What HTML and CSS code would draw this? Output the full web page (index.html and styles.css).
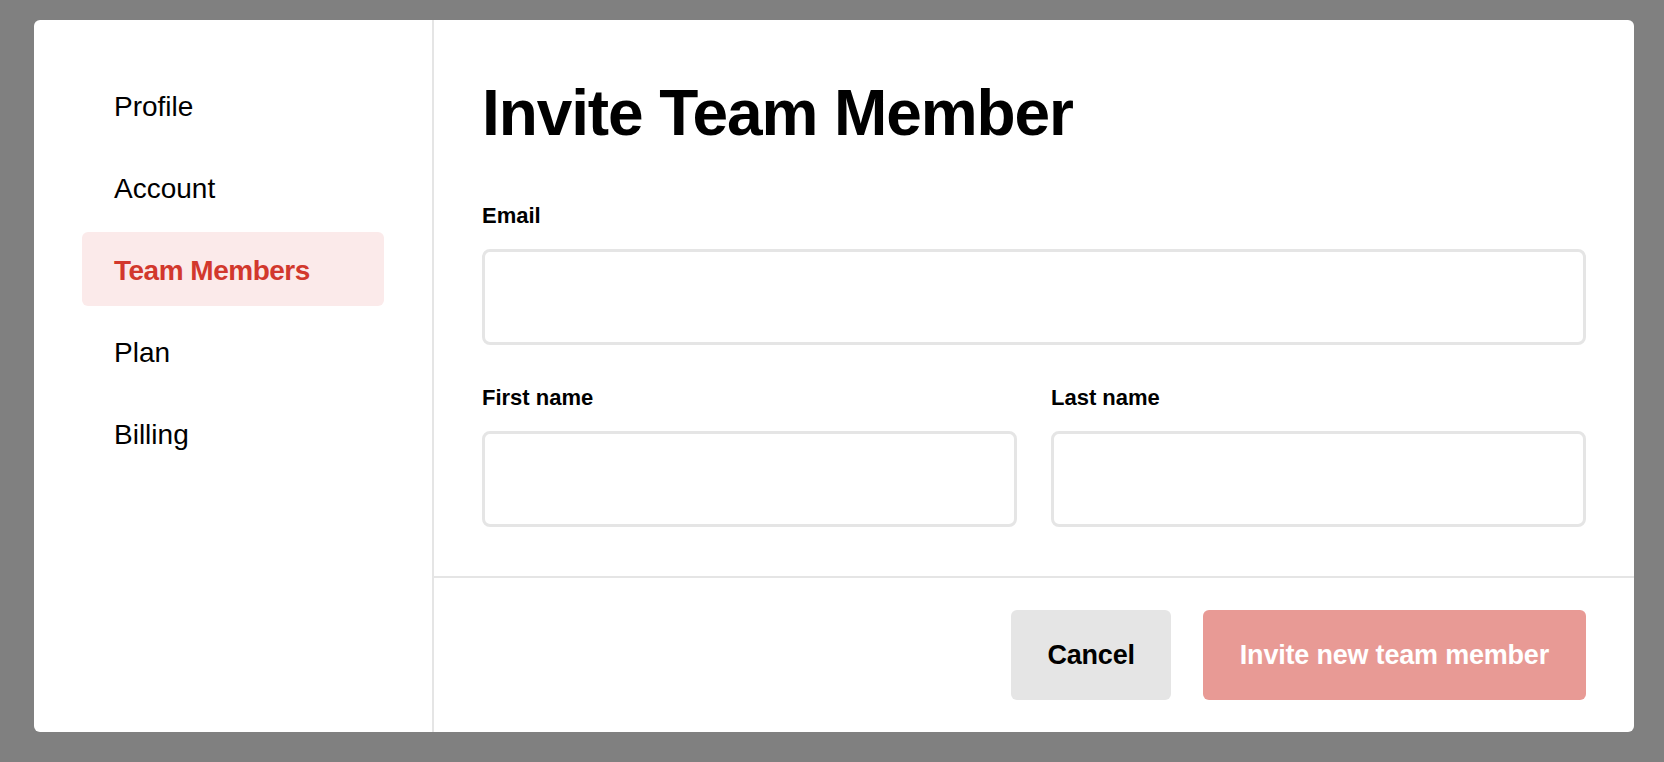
FILE: index.html
```html
<!DOCTYPE html>
<html lang="en">
<head>
<meta charset="utf-8">
<title>Invite Team Member</title>
<link rel="stylesheet" href="styles.css">
</head>
<body>
<div class="modal">
  <aside class="sidebar">
    <nav class="nav">
      <a class="nav-item">Profile</a>
      <a class="nav-item">Account</a>
      <a class="nav-item active">Team Members</a>
      <a class="nav-item">Plan</a>
      <a class="nav-item">Billing</a>
    </nav>
  </aside>
  <section class="main">
    <div class="content">
      <h1 class="title">Invite Team Member</h1>
      <form class="form">
        <div class="field">
          <label class="label">Email</label>
          <input class="input" type="text">
        </div>
        <div class="row">
          <div class="field">
            <label class="label">First name</label>
            <input class="input" type="text">
          </div>
          <div class="field">
            <label class="label">Last name</label>
            <input class="input" type="text">
          </div>
        </div>
      </form>
    </div>
    <div class="footer">
      <button class="btn btn-cancel" type="button">Cancel</button>
      <button class="btn btn-primary" type="button">Invite new team member</button>
    </div>
  </section>
</div>
</body>
</html>
```

FILE: styles.css
```css
* { box-sizing: border-box; }

html, body {
  margin: 0;
  height: 762px;
}

body {
  background: #808080;
  padding: 20px 30px 30px 34px;
  font-family: "Liberation Sans", Arial, sans-serif;
  color: #000;
}

.modal {
  display: flex;
  width: 1600px;
  height: 712px;
  background: #fff;
  border-radius: 6px;
  overflow: hidden;
}

.sidebar {
  width: 400px;
  flex: none;
  border-right: 2px solid #e5e5e5;
  padding: 48px;
}

.nav {
  display: flex;
  flex-direction: column;
  gap: 8px;
}

.nav-item {
  display: block;
  height: 74px;
  padding: 3px 32px 0;
  line-height: 71px;
  font-size: 28px;
  border-radius: 6px;
  color: #000;
}

.nav-item.active {
  background: #fbeaea;
  color: #d2382d;
  font-weight: bold;
  letter-spacing: -0.5px;
}

.main {
  flex: 1;
  display: flex;
  flex-direction: column;
  min-width: 0;
}

.content {
  flex: 1;
  padding: 55px 48px 0;
}

.title {
  margin: 0;
  font-size: 64px;
  line-height: 76px;
  font-weight: bold;
  letter-spacing: -1.1px;
}

.form {
  margin-top: 51px;
  display: flex;
  flex-direction: column;
  gap: 39px;
}

.row {
  display: grid;
  grid-template-columns: 1fr 1fr;
  gap: 34px;
}

.field {
  display: flex;
  flex-direction: column;
  gap: 19px;
}

.label {
  font-size: 22px;
  line-height: 28px;
  font-weight: bold;
}

.input {
  display: block;
  width: 100%;
  height: 96px;
  border: 3px solid #e5e5e5;
  border-radius: 8px;
  background: #fff;
  outline: none;
  font-size: 22px;
  padding: 0 20px;
}

.footer {
  border-top: 2px solid #e5e5e5;
  padding: 32px 48px;
  display: flex;
  justify-content: flex-end;
  gap: 32px;
}

.btn {
  height: 90px;
  border: none;
  border-radius: 6px;
  font-family: "Liberation Sans", Arial, sans-serif;
  font-size: 27px;
  font-weight: bold;
  letter-spacing: -0.2px;
  display: flex;
  align-items: center;
  justify-content: center;
  padding-top: 2px;
}

.btn-cancel {
  background: #e5e5e5;
  color: #000;
  padding-left: 36px;
  padding-right: 36px;
}

.btn-primary {
  background: #e89a95;
  color: #fff;
  padding-left: 37px;
  padding-right: 37px;
}
```
